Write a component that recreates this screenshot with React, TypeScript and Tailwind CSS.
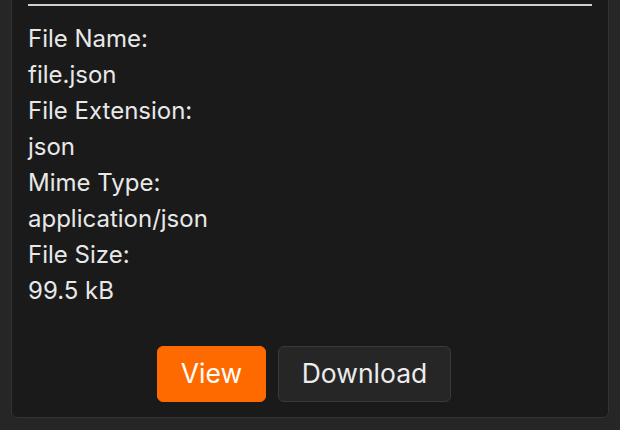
const fields = [
  { label: 'File Name:', value: 'file.json' },
  { label: 'File Extension:', value: 'json' },
  { label: 'Mime Type:', value: 'application/json' },
  { label: 'File Size:', value: '99.5 kB' },
]

export default function App() {
  return (
    <div
      className="h-[430px] w-[620px] overflow-hidden bg-[#262626] px-[11px] pb-[12px]"
      style={{ fontFamily: 'Inter, "Noto Sans", sans-serif' }}
    >
      <div className="-mt-[10px] rounded-md border border-[#333333] bg-[#1a1a1a] px-4 pt-[13px] pb-[15px]">
        <hr className="border-0 border-t-2 border-[#d0d0d0]" />

        <div className="mt-[15px] text-[24px] leading-[36px] text-[#e8e8e8]">
          {fields.map((field) => (
            <div key={field.label}>
              <div>{field.label}</div>
              <div>{field.value}</div>
            </div>
          ))}
        </div>

        <div className="mt-[37px] flex justify-center">
          <button className="mr-3 flex h-[56px] w-[109px] items-center justify-center rounded-md border border-[#ff6a00] bg-[#ff6a00] text-[26.5px] text-white">
            View
          </button>
          <button className="mr-3 flex h-[56px] w-[173px] items-center justify-center rounded-md border border-[#3a3a3a] bg-[#262626] text-[26.5px] text-[#ececec]">
            Download
          </button>
        </div>
      </div>
    </div>
  )
}
